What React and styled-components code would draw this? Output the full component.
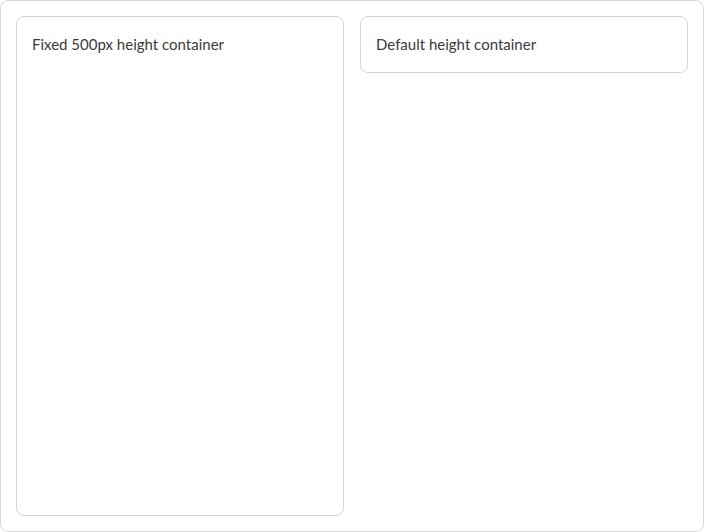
import React from "react";
import styled, {createGlobalStyle} from "styled-components";

const GlobalStyle = createGlobalStyle`
  html, body {
    margin: 0;
    padding: 0;
    background: #ffffff;
  }
  * {
    box-sizing: border-box;
  }
`

const Frame = styled.div`
  width: 704px;
  height: 532px;
  border: 1px solid #d9d9d9;
  border-radius: 8px;
  padding: 15px;
  display: grid;
  grid-template-columns: 328px 328px;
  gap: 16px;
  align-items: start;
  font-family: Lato, "Noto Sans", sans-serif;
`

const Panel = styled.div`
  height: ${({h}) => h || "auto"};
  border: 1px solid #d6d6d6;
  border-radius: 8px;
  padding: 16px 15px;
  font-size: 15px;
  line-height: 23px;
  color: #3b3b3b;
`

const App = () => {
    return (
        <>
            <GlobalStyle/>
            <Frame>
                <Panel h={"500px"}>Fixed 500px height container</Panel>
                <Panel>Default height container</Panel>
            </Frame>
        </>
    )
}

export default App;
